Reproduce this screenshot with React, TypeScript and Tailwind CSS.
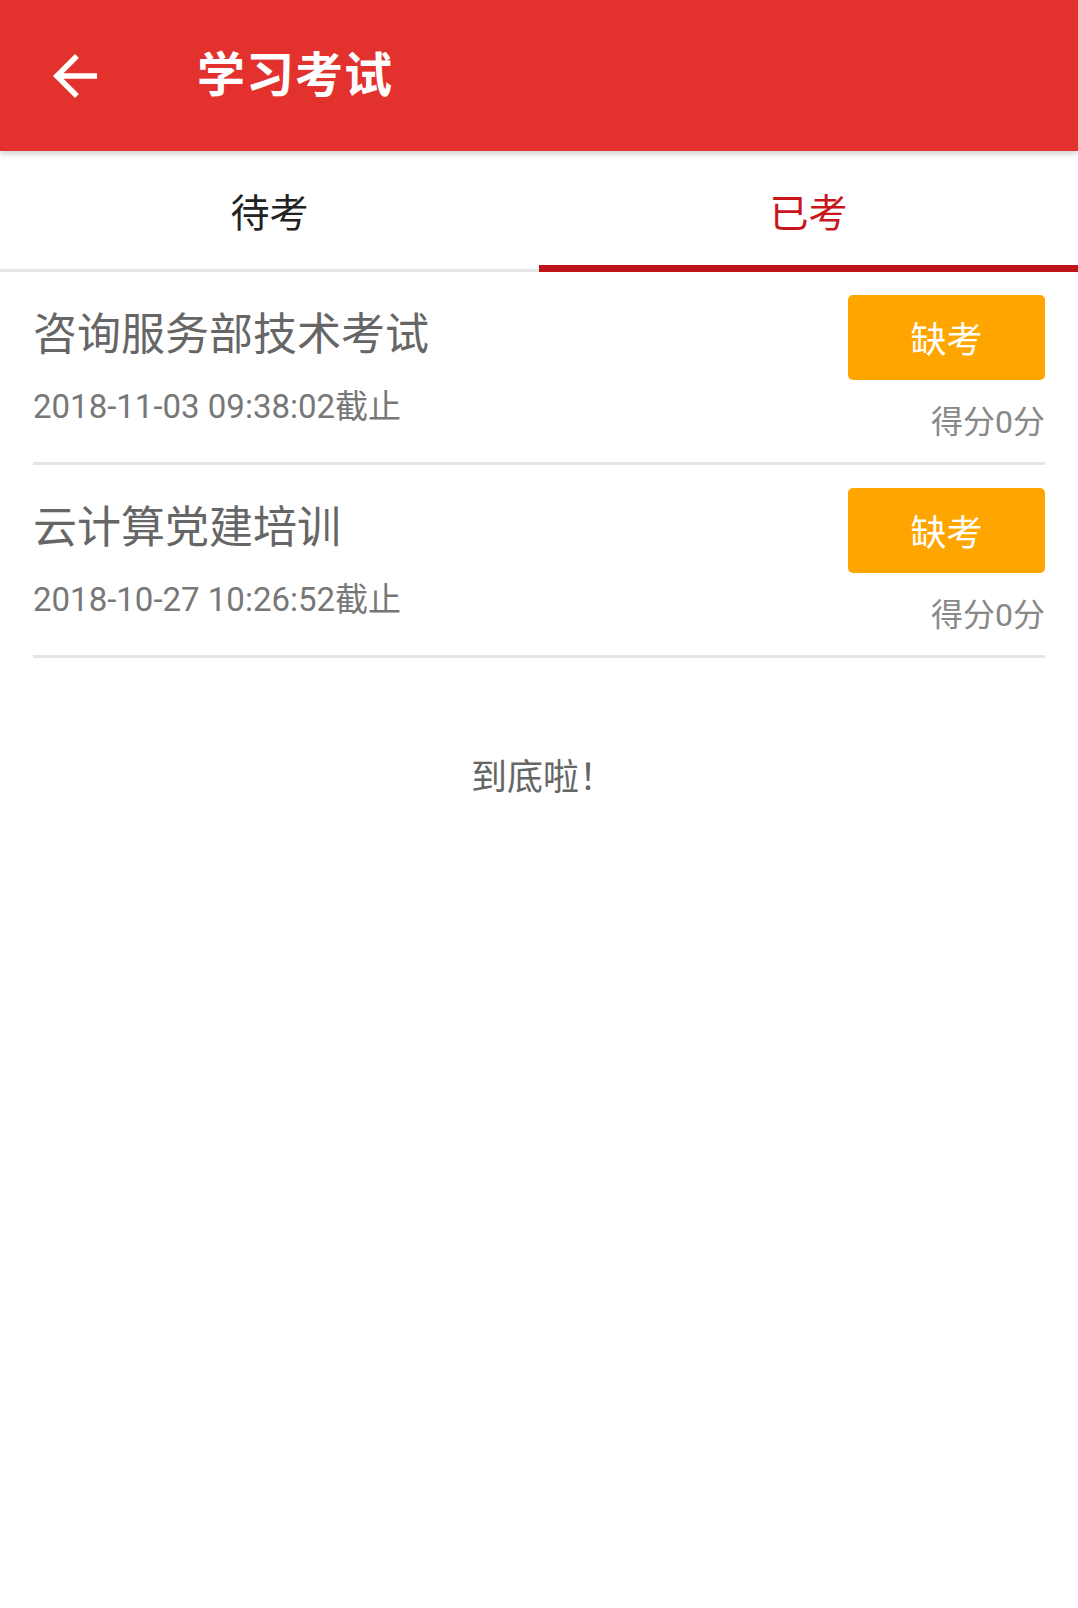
import React from 'react';

const exams = [
  { title: '咨询服务部技术考试', deadline: '2018-11-03 09:38:02截止', score: '得分0分' },
  { title: '云计算党建培训', deadline: '2018-10-27 10:26:52截止', score: '得分0分' },
];

const font = "font-['Roboto','Noto_Sans_CJK_SC',sans-serif]";

export default function App() {
  return (
    <div className={`w-[1078px] min-h-[1608px] bg-white ${font}`}>
      {/* Header */}
      <div className="relative z-10 h-[151px] bg-[#e3322d] flex items-center shadow-[0_3px_6px_rgba(0,0,0,0.18)]">
        <svg className="ml-[42px] w-[66px] h-[66px]" viewBox="0 0 24 24" fill="#ffffff">
          <path d="M20 11H7.83l5.59-5.59L12 4l-8 8 8 8 1.41-1.41L7.83 13H20v-2z" />
        </svg>
        <h1 className="ml-[89px] text-[48px] leading-none font-bold text-white tracking-[1px]">学习考试</h1>
      </div>

      {/* Tabs */}
      <div className="flex h-[121px] border-b-[3px] border-[#e6e6e6]">
        <div className="flex-1 flex items-center justify-center pt-[8px] text-[39px] text-[#222]">待考</div>
        <div className="flex-1 relative flex items-center justify-center pt-[8px] text-[39px] text-[#c8161d]">
          已考
          <div className="absolute left-0 right-0 bottom-[-3px] h-[7px] bg-[#c0141b]" />
        </div>
      </div>

      {/* List */}
      <div className="mx-[33px]">
        {exams.map((e) => (
          <div key={e.title} className="flex justify-between h-[193px] border-b-[3px] border-[#e4e4e4]">
            <div className="pt-[39px] flex flex-col">
              <div className="text-[44px] leading-[48px] text-[#666]">{e.title}</div>
              <div className="mt-[28px] text-[33px] leading-[40px] text-[#777]">{e.deadline}</div>
            </div>
            <div className="pt-[23px] flex flex-col items-end">
              <button className="w-[197px] h-[85px] rounded-[5px] bg-[#ffa500] text-white text-[36px] leading-none pt-[6px] flex items-center justify-center">
                缺考
              </button>
              <div className="mt-[22px] text-[32px] leading-[40px] text-[#888]">{e.score}</div>
            </div>
          </div>
        ))}
      </div>

      <div className="mt-[100px] pl-[8px] text-center text-[36px] leading-[40px] text-[#666]">到底啦！</div>
    </div>
  );
}
